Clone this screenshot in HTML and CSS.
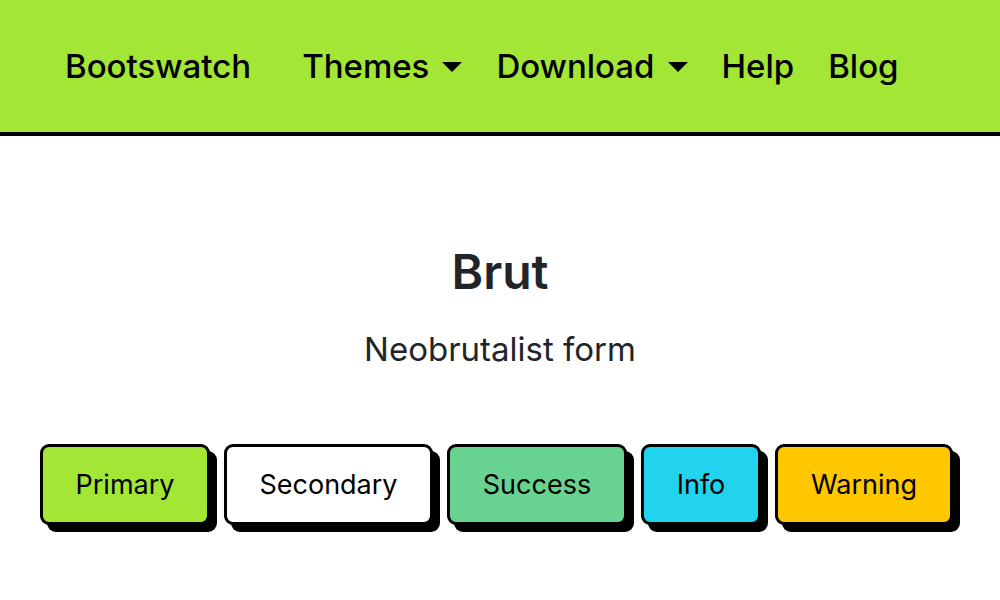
FILE: index.html
```html
<!DOCTYPE html>
<html lang="en">
<head>
<meta charset="utf-8">
<title>Brut</title>
<link rel="stylesheet" href="styles.css">
</head>
<body>
<nav class="navbar">
  <a class="brand" href="#">Bootswatch</a>
  <ul class="nav">
    <li class="nav-item"><a href="#">Themes<span class="caret"></span></a></li>
    <li class="nav-item"><a href="#">Download<span class="caret"></span></a></li>
    <li class="nav-item"><a href="#">Help</a></li>
    <li class="nav-item"><a href="#">Blog</a></li>
  </ul>
</nav>
<main class="hero">
  <h1 class="title">Brut</h1>
  <p class="lead">Neobrutalist form</p>
  <div class="buttons">
    <button class="btn btn-primary">Primary</button>
    <button class="btn btn-secondary">Secondary</button>
    <button class="btn btn-success">Success</button>
    <button class="btn btn-info">Info</button>
    <button class="btn btn-warning">Warning</button>
  </div>
</main>
</body>
</html>
```
FILE: styles.css
```css
* { box-sizing: border-box; }
html, body { margin: 0; padding: 0; }
body {
  font-family: Inter, "Noto Sans", sans-serif;
  background: #fff;
  color: #212529;
  width: 1000px;
  height: 600px;
  overflow: hidden;
}
.navbar {
  height: 136px;
  background: #a3e635;
  border-bottom: 4px solid #000;
  display: flex;
  align-items: center;
  padding-left: 65px;
}
.brand {
  font-size: 33px;
  font-weight: 500;
  color: #000;
  text-decoration: none;
  margin-right: 51px;
}
.nav {
  list-style: none;
  margin: 0;
  padding: 0;
  display: flex;
  gap: 34px;
}
.nav-item a {
  font-size: 33px;
  font-weight: 500;
  color: #000;
  text-decoration: none;
  display: flex;
  align-items: center;
}
.caret {
  display: inline-block;
  width: 0;
  height: 0;
  border-left: 10px solid transparent;
  border-right: 10px solid transparent;
  border-top: 10px solid #000;
  margin-left: 13px;
  margin-top: 2px;
}
.hero {
  display: flex;
  flex-direction: column;
  align-items: center;
}
.title {
  font-size: 48px;
  font-weight: 600;
  margin: 106px 0 0;
  line-height: 60px;
}
.lead {
  font-size: 33px;
  font-weight: 400;
  margin: 23px 0 0;
  line-height: 48px;
}
.buttons {
  display: flex;
  gap: 14px;
  margin-top: 71px;
  padding-right: 7px;
}
.btn {
  font-family: inherit;
  font-size: 27px;
  color: #000;
  height: 81px;
  border: 3px solid #000;
  border-radius: 9px;
  box-shadow: 7px 7px 0 #000;
  padding: 0 30px;
  cursor: pointer;
}
.btn-primary { background: #a3e635; width: 170px; }
.btn-secondary { background: #fff; width: 209px; }
.btn-success { background: #68d391; width: 180px; }
.btn-info { background: #22d3ee; width: 120px; }
.btn-warning { background: #ffc700; width: 178px; }
```
